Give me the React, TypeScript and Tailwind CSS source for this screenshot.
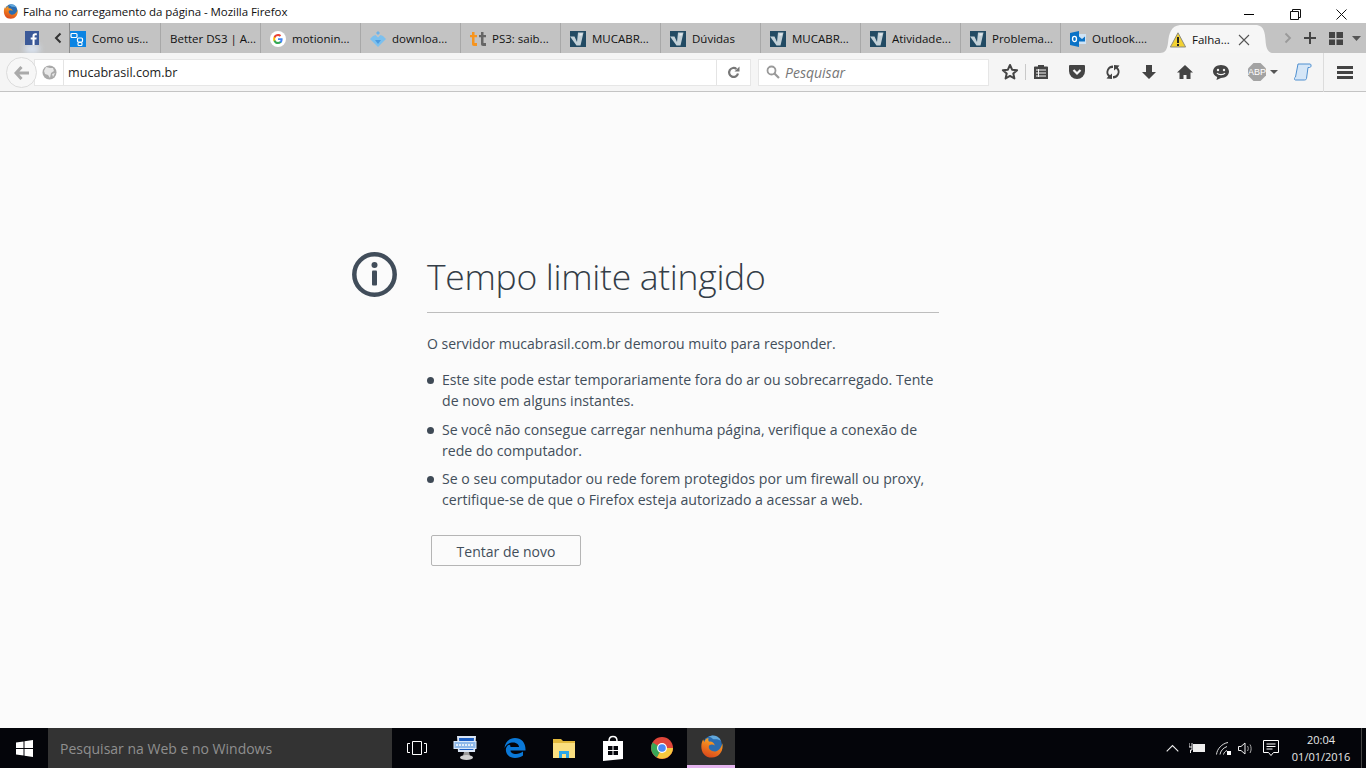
import React from "react";

const MucaIcon = () => (
  <svg width="16" height="16" viewBox="0 0 16 16" className="shrink-0">
    <rect width="16" height="16" fill="#214a63" />
    <path d="M0 5.500h4.500L7 11l1-9.500h5.500L10.500 14.500H6.500z" fill="#c2d0d7" />
    <path d="M9.500 2.500h3l-1 2H9.500z" fill="#e3eaee" />
  </svg>
);

const FbIcon = () => (
  <svg width="14" height="14" viewBox="0 0 14 14">
    <rect width="14" height="14" fill="#3b5998" />
    <path d="M9.600 14V8.600h1.800l.3-2.100H9.600V5.200c0-.6.2-1 1-1h1.200V2.300c-.3 0-.9-.1-1.600-.1-1.600 0-2.700 1-2.700 2.800v1.500H5.700v2.100h1.800V14z" fill="#fff" />
  </svg>
);

const ChainIcon = () => (
  <svg width="16" height="16" viewBox="0 0 16 16" className="shrink-0">
    <rect width="16" height="16" fill="#0b84e3" />
    <rect x="1" y="2.500" width="6" height="4" rx="1" fill="none" stroke="#fff" strokeWidth="1.200" />
    <rect x="7.500" y="7" width="5" height="4" rx="1" fill="none" stroke="#fff" strokeWidth="1.200" />
    <rect x="8" y="11.500" width="4" height="3" rx="1" fill="none" stroke="#fff" strokeWidth="1.100" />
  </svg>
);

const GoogleIcon = () => (
  <svg width="16" height="16" viewBox="0 0 16 16" className="shrink-0">
    <circle cx="8" cy="8" r="8" fill="#fff" />
    <path d="M12.600 8.200c0-.4 0-.7-.1-1H8v1.900h2.600c-.1.6-.5 1.200-1 1.500v1.300h1.600c1-.9 1.400-2.200 1.400-3.700z" fill="#4285f4" />
    <path d="M8 13c1.300 0 2.400-.4 3.200-1.200l-1.600-1.200c-.4.3-1 .5-1.600.5-1.300 0-2.300-.9-2.700-2H3.700v1.300C4.500 12 6.100 13 8 13z" fill="#34a853" />
    <path d="M5.300 9.100c-.2-.7-.2-1.400 0-2.100V5.700H3.700c-.7 1.400-.7 3.200 0 4.600z" fill="#fbbc05" />
    <path d="M8 5c.7 0 1.300.2 1.800.7l1.400-1.400C10.400 3.500 9.300 3 8 3 6.100 3 4.500 4 3.700 5.700L5.300 7c.4-1.100 1.400-2 2.700-2z" fill="#ea4335" />
  </svg>
);

const DownloadFav = () => (
  <svg width="16" height="16" viewBox="0 0 16 16" className="shrink-0">
    <path d="M8 0l2 2-2 2-2-2z" fill="#6db3ea" />
    <path d="M3 5l2.500-1L8 6.500 10.500 4 13 5l3 3-8 8-8-8z" fill="#7cc0ee" />
    <path d="M5 9h6l-3 4z" fill="#4a9adf" />
  </svg>
);

const TtIcon = () => (
  <svg width="16" height="16" viewBox="0 0 16 16" className="shrink-0">
    <path d="M2 1h2.500v3H7v2.300H4.500V12H7v3H4c-1.300 0-2-.8-2-2V6.300H0V4h2z" fill="#f7941d" />
    <path d="M11 1h2.500v3H16v2.300h-2.500V12H16v3h-3c-1.300 0-2-.8-2-2V6.300H9V4h2z" fill="#666" />
  </svg>
);

const OutlookIcon = () => (
  <svg width="16" height="16" viewBox="0 0 16 16" className="shrink-0">
    <rect x="8" y="3" width="8" height="10" fill="#cfe3f5" />
    <path d="M9 5.500l3 2.500 3-2.500v5H9z" fill="#0a72c6" />
    <path d="M0 2l9-2v16l-9-2z" fill="#0a72c6" />
    <ellipse cx="4.500" cy="8" rx="2" ry="2.600" fill="none" stroke="#fff" strokeWidth="1.300" />
  </svg>
);

const Warn = () => (
  <svg width="16" height="16" viewBox="0 0 16 16" className="shrink-0">
    <path d="M8 .8L15.600 15H.4z" fill="#f3d232" stroke="#8b8b80" strokeWidth="1" strokeLinejoin="round" />
    <rect x="7" y="5" width="2" height="6" fill="#222" />
    <rect x="7" y="12" width="2" height="2" fill="#222" />
  </svg>
);

const Firefox = ({ size, id }: { size: number; id: string }) => (
  <svg width={size} height={size} viewBox="0 0 24 24" className="shrink-0">
    <defs>
      <linearGradient id={id} x1="0.700" y1="0" x2="0.300" y2="1">
        <stop offset="0" stopColor="#f6b52e" />
        <stop offset="0.500" stopColor="#ee7a1e" />
        <stop offset="1" stopColor="#d9471c" />
      </linearGradient>
    </defs>
    <circle cx="13" cy="10.500" r="10" fill="#2a6cb0" />
    <path d="M13 .5a10 10 0 0 1 9 5.500c-2-1.500-5-2-8-1.500-1.500-1.500-3-2.500-5-3z" fill="#62a8dc" />
    <path d="M3.500 4.500C-.5 10 .5 23.500 12.500 23.500 20.500 23.500 24.800 16 23.300 8.500 22.300 14 18 18 13.500 17 9.500 16 8 12.500 10 10.500c1.500-1 4-1 5.500.5-.8-3-3.500-4.500-6-4-1-1-1.200-2.500-.5-4-3 .5-4 2.500-4.500 4.500-.3-1-.7-2-1.500-3z" fill={`url(#${id})`} />
  </svg>
);

const Tab = ({ icon, label, sep = true }: { icon?: React.ReactNode; label: string; sep?: boolean }) => (
  <div className={`w-[100px] h-[30px] shrink-0 flex items-center gap-[6px] pl-[9px] pt-[1px] text-[11.500px] text-[#111] whitespace-nowrap ${sep ? "border-r border-[#a8a8a8]" : ""}`}>
    {icon}
    <span>{label}</span>
  </div>
);

const ToolGlyph = ({ children }: { children: React.ReactNode }) => (
  <svg width="18" height="18" viewBox="0 0 18 18" className="shrink-0">{children}</svg>
);

const Bullet = ({ children }: { children: React.ReactNode }) => (
  <li className="flex">
    <span className="w-[15px] shrink-0 pt-[8px]">
      <span className="block w-[7px] h-[7px] rounded-full bg-[#3f4a56]" />
    </span>
    <span>{children}</span>
  </li>
);

export default function App() {
  return (
    <div
      className="w-[1366px] h-[768px] overflow-hidden flex flex-col bg-[#fbfbfb]"
      style={{ fontFamily: '"Open Sans", "Noto Sans", sans-serif' }}
    >
      {/* Title bar */}
      <div className="h-[23px] shrink-0 bg-white flex items-center">
        <div className="ml-[3px]"><Firefox size={15} id="ffa" /></div>
        <span className="ml-[5px] text-[11.500px] text-[#111] tracking-[-0.05px]">Falha no carregamento da página - Mozilla Firefox</span>
        <div className="ml-auto mr-[2px] pt-[5px] flex items-center h-full">
          <div className="w-[46px] flex justify-center"><div className="w-[10px] h-px bg-black" /></div>
          <div className="w-[46px] flex justify-center">
            <svg width="11" height="11" viewBox="0 0 11 11"><path d="M.5 2.500h8v8h-8zM2.500 2.500v-2h8v8h-2" fill="none" stroke="#111" /></svg>
          </div>
          <div className="w-[46px] flex justify-center">
            <svg width="11" height="11" viewBox="0 0 11 11"><path d="M.5.500l10 10M10.500.500l-10 10" stroke="#111" /></svg>
          </div>
        </div>
      </div>

      {/* Tab bar */}
      <div className="h-[30px] shrink-0 bg-[#c3c3c3] flex items-center">
        <div className="w-[46px] h-full relative flex items-center justify-end pr-[7px]">
          <div className="absolute left-[25px] bottom-0 w-[14px] h-[8px] bg-[#dbe6f5] blur-[3px]" />
          <div className="relative"><FbIcon /></div>
        </div>
        <div className="w-[24px] h-full flex items-center pl-[8px] border-r border-[#8d8d8d]">
          <svg width="8" height="12" viewBox="0 0 8 12"><path d="M6.500 1.500L2 6l4.500 4.500" fill="none" stroke="#333" strokeWidth="2" /></svg>
        </div>
        <div className="w-[91px] h-[30px] shrink-0 flex items-center gap-[6px] pt-[1px] text-[11.500px] text-[#111] whitespace-nowrap border-r border-[#a8a8a8]">
          <ChainIcon />
          <span>Como us...</span>
        </div>
        <div className="w-[100px] h-[30px] shrink-0 flex items-center pl-[9px] pt-[1px] text-[11.500px] text-[#111] whitespace-nowrap border-r border-[#a8a8a8]">Better DS3 | A...</div>
        <Tab icon={<GoogleIcon />} label="motionin..." />
        <Tab icon={<DownloadFav />} label="downloa..." />
        <Tab icon={<TtIcon />} label="PS3: saib..." />
        <Tab icon={<MucaIcon />} label="MUCABR..." />
        <Tab icon={<MucaIcon />} label="Dúvidas" />
        <Tab icon={<MucaIcon />} label="MUCABR..." />
        <Tab icon={<MucaIcon />} label="Atividade..." />
        <Tab icon={<MucaIcon />} label="Problema..." />
        <Tab icon={<OutlookIcon />} label="Outlook...." sep={false} />
        <div className="w-[102px] h-[28px] self-end shrink-0 ml-[-1px] relative flex items-center pl-[10px] gap-[6px] pt-[1px] text-[11.500px] text-[#111] whitespace-nowrap">
          <svg width="112" height="28" viewBox="0 0 112 28" className="absolute left-0 top-0">
            <path d="M0 28c5 0 7-3 8-10C9 8 11 1 20 0h77c7 1 8 8 8.500 15 .5 8 2 13 8 13z" fill="#f6f6f6" />
          </svg>
          <div className="relative"><Warn /></div>
          <span className="relative">Falha...</span>
          <svg width="12" height="12" viewBox="0 0 12 12" className="relative ml-[2px]"><path d="M1 1l10 10M11 1L1 11" stroke="#555" strokeWidth="1.100" /></svg>
        </div>
        <div className="flex-1 flex items-center pl-[22px] h-full">
          <svg width="8" height="12" viewBox="0 0 8 12"><path d="M1.500 1.500L6 6l-4.500 4.500" fill="none" stroke="#999" strokeWidth="1.800" /></svg>
          <svg width="12" height="12" viewBox="0 0 12 12" className="ml-[12px]"><path d="M6 0v12M0 6h12" stroke="#444" strokeWidth="2" /></svg>
          <svg width="14" height="13" viewBox="0 0 14 13" className="ml-[13px]"><path d="M0 0h6v6H0zM7.500 0H14v6H7.500zM0 7.500h6V13H0zM7.500 7.500H14V13H7.500z" fill="#444" /></svg>
          <svg width="9" height="5" viewBox="0 0 9 5" className="ml-[9px]"><path d="M0 0h9L4.500 5z" fill="#555" /></svg>
        </div>
      </div>

      {/* Navigation bar */}
      <div className="h-[39px] shrink-0 bg-[#f5f5f5] border-b border-[#c4c4c4] flex items-center relative">
        <div className="absolute left-[6px] top-[4px] w-[31px] h-[31px] rounded-full bg-[#f7f7f7] border border-[#dcdcdc] flex items-center justify-center">
          <svg width="16" height="14" viewBox="0 0 16 14"><path d="M7.500 1L2 7l5.500 6M2.500 7H15" fill="none" stroke="#aaa" strokeWidth="3" /></svg>
        </div>
        <div className="ml-[34px] w-[717px] h-[27px] bg-white border border-[#e6e6e6] flex items-center">
          <div className="w-[28px] flex justify-end pr-[6px] shrink-0">
            <svg width="15" height="15" viewBox="0 0 15 15"><circle cx="7.500" cy="7.500" r="7" fill="#a9a9a9" /><path d="M4 2l4 1 3 0 1 3-3 2-1 5-2-3-3-1-1-3zM10 9l3-1-2 4z" fill="#e8e8e8" /></svg>
          </div>
          <div className="h-full w-px bg-[#e4e4e4] mr-[4px]" />
          <span className="text-[12.600px] text-[#222] pt-[3px]">mucabrasil.com.br</span>
          <div className="ml-auto h-full w-[34px] border-l border-[#e4e4e4] flex items-center justify-center">
            <svg width="13" height="13" viewBox="0 0 13 13"><path d="M11 7.500A4.500 4.500 0 1 1 9.500 3" fill="none" stroke="#777" strokeWidth="2.200" /><path d="M7.500 5.500H12.500V.5z" fill="#777" /></svg>
          </div>
        </div>
        <div className="ml-[7px] w-[231px] h-[27px] bg-white border border-[#e6e6e6] flex items-center pl-[7px] gap-[5px]">
          <svg width="14" height="14" viewBox="0 0 14 14"><circle cx="5.500" cy="5.500" r="4" fill="none" stroke="#999" strokeWidth="1.800" /><path d="M8.500 8.500L13 13" stroke="#999" strokeWidth="2.200" /></svg>
          <span className="text-[14px] italic text-[#777] pt-[1px]">Pesquisar</span>
        </div>
        <div className="flex items-center ml-[12px]">
          <ToolGlyph><path d="M9 2l2.100 4.700 5 .5-3.800 3.300 1.100 5L9 12.900l-4.400 2.600 1.100-5L1.900 7.200l5-.5z" fill="none" stroke="#444" strokeWidth="2" strokeLinejoin="round" /></ToolGlyph>
          <div className="w-px h-[16px] bg-[#c9c9c9] ml-[6px] mr-[6px]" />
          <ToolGlyph>
            <path d="M2 4.500c0-.8.500-1 1-1h3V2h6v1.500h3c.5 0 1 .2 1 1V16H2z" fill="#444" />
            <path d="M4 7h10M4 10h10M4 13h10" stroke="#f5f5f5" /><path d="M6.500 6v8" stroke="#f5f5f5" />
          </ToolGlyph>
          <div className="w-[18px]" />
          <ToolGlyph><path d="M2 2h14a1 1 0 0 1 1 1v5a8 8 0 0 1-16 0V3a1 1 0 0 1 1-1z" fill="#444" /><path d="M5.500 7L9 10.500 12.500 7" fill="none" stroke="#f5f5f5" strokeWidth="2.200" /></ToolGlyph>
          <div className="w-[18px]" />
          <ToolGlyph><path d="M9 2.500a6.500 6.500 0 0 0-4.800 10.900L2.500 15.500 8 16V10.500l-2 1.700A4 4 0 0 1 9 5z" fill="#444" /><path d="M9 15.500a6.500 6.500 0 0 0 4.800-10.900l1.700-2.100L10 2v5.500l2-1.700A4 4 0 0 1 9 13z" fill="#444" /></ToolGlyph>
          <div className="w-[18px]" />
          <ToolGlyph><path d="M6 2h6v7h4l-7 7-7-7h4z" fill="#444" /></ToolGlyph>
          <div className="w-[18px]" />
          <ToolGlyph><path d="M9 2L1 9.500h2.500V16h4v-4h3v4h4V9.500H17z" fill="#444" /></ToolGlyph>
          <div className="w-[18px]" />
          <ToolGlyph><path d="M9 2c4.400 0 8 2.800 8 6.500S13.400 15 9 15l-4.500 2 .7-3C2.700 12.900 1 10.900 1 8.500 1 4.800 4.600 2 9 2z" fill="#444" /><circle cx="6" cy="7" r="1.200" fill="#f5f5f5" /><circle cx="12" cy="7" r="1.200" fill="#f5f5f5" /><path d="M5 10c1.500 2.200 6.500 2.200 8 0" fill="none" stroke="#f5f5f5" strokeWidth="1.300" /></ToolGlyph>
          <div className="w-[18px]" />
          <svg width="30" height="18" viewBox="0 0 30 18" className="shrink-0">
            <path d="M5.500 0h7L18 5.500v7L12.500 18h-7L0 12.500v-7z" fill="#a3a3a3" />
            <text x="9" y="12" fontSize="9" fill="#fff" textAnchor="middle" fontFamily="Liberation Sans">ABP</text>
            <path d="M22 7h8l-4 4z" fill="#555" />
          </svg>
          <div className="w-[16px]" />
          <svg width="18" height="18" viewBox="0 0 18 18" className="shrink-0">
            <path d="M4 1h12c1.500 0 1.500 3.500-.5 3.500H14l-1.500 11c-.2 1-1 1.500-2 1.500H1.500c-1.500 0-1.500-2.500 0-3z" fill="#d5e6f7" stroke="#4e8fd0" strokeWidth="1" />
          </svg>
          <div className="w-px h-[39px] bg-[#dcdcdc] ml-[11px] mr-[13px]" />
          <svg width="16" height="13" viewBox="0 0 16 13" className="shrink-0"><path d="M0 0h16v3H0zM0 5h16v3H0zM0 10h16v3H0z" fill="#444" /></svg>
        </div>
      </div>

      {/* Page */}
      <main className="flex-1 relative min-h-0 pt-[155px] pl-[352px]">
        <div className="flex">
          <svg width="45" height="45" viewBox="0 0 45 45" className="shrink-0 mt-[5px]">
            <circle cx="22.500" cy="22.500" r="20.200" fill="none" stroke="#414d5a" strokeWidth="4.500" />
            <circle cx="22.500" cy="13" r="3" fill="#414d5a" />
            <rect x="20" y="18.500" width="5" height="15" rx="1" fill="#414d5a" />
          </svg>
          <div className="ml-[30px] w-[512px] text-[#424e5a]">
            <h1 className="h-[66px] border-b border-[#bdbdbd] text-[35.500px] leading-[58px] font-light text-[#343d47] tracking-[-0.3px]">Tempo limite atingido</h1>
            <p className="mt-[20px] text-[14.030px] leading-[21px]">O servidor mucabrasil.com.br demorou muito para responder.</p>
            <ul className="mt-[15px] flex flex-col gap-[7.500px] text-[14.140px] leading-[21px]">
              <Bullet>Este site pode estar temporariamente fora do ar ou sobrecarregado. Tente<br />de novo em alguns instantes.</Bullet>
              <Bullet>Se você não consegue carregar nenhuma página, verifique a conexão de<br />rede do computador.</Bullet>
              <Bullet>Se o seu computador ou rede forem protegidos por um firewall ou proxy,<br />certifique-se de que o Firefox esteja autorizado a acessar a web.</Bullet>
            </ul>
            <button className="block mt-[25px] ml-[4px] w-[150px] h-[31px] pt-[1px] bg-[#fbfbfb] border border-[#b5b5b5] rounded-[2px] text-[14px] text-[#424e5a]">Tentar de novo</button>
          </div>
        </div>
      </main>

      {/* Taskbar */}
      <div className="h-[40px] shrink-0 bg-[#04050a] flex items-center text-white">
        <div className="w-[48px] flex justify-center">
          <svg width="17" height="17" viewBox="0 0 17 17"><path d="M0 2.500l7.500-1V8H0zM8.500 1.300L17 0v8H8.500zM0 9h7.500v6.500l-7.500-1zM8.500 9H17v8l-8.500-1.200z" fill="#fff" /></svg>
        </div>
        <div className="w-[344px] h-full bg-[#333333] flex items-center pl-[12px] pt-[1px] text-[14px] text-[#8f8f8f]">Pesquisar na Web e no Windows</div>
        <div className="w-[49px] h-full flex items-center justify-center">
          <svg width="20" height="14" viewBox="0 0 20 14"><path d="M5.500.5h9v13h-9z" fill="none" stroke="#fff" /><path d="M3 2.500H.5v9H3M17 2.500h2.500v9H17" fill="none" stroke="#fff" /></svg>
        </div>
        <div className="w-[50px] h-full flex items-center justify-center">
          <svg width="26" height="26" viewBox="0 0 26 26">
            <path d="M4 1h19l-1 16H5z" fill="#dbe6f5" />
            <path d="M6 3h15l-.7 12H6.500z" fill="#1c5fc4" />
            <rect x="1" y="6.500" width="22" height="7" fill="#8fb9ea" stroke="#dbe9fa" strokeWidth="1" />
            <path d="M3 10h18" stroke="#fff" strokeWidth="1.500" strokeDasharray="2 1" />
            <path d="M11 17h5l1 4h-7z" fill="#9a9a9a" />
            <ellipse cx="13.500" cy="22.500" rx="6.500" ry="2.500" fill="#d0d0d0" />
          </svg>
        </div>
        <div className="w-[48px] h-full flex items-center justify-center">
          <svg width="22" height="22" viewBox="0 0 22 22"><path d="M11 1C5 1 1 5.500 .5 11c2-4 6-5.500 8.500-5.500 4 0 6 2.500 6 4.500H6.500C6.500 6 3 8 2 11.500 1 17 5.500 21 11 21c3.500 0 6-1 8-2.500v-4c-2 1.500-4.500 2.500-7 2.500-3 0-5.500-1.500-5.500-3.500h15C22 6 17.500 1 11 1z" fill="#0a78d7" /></svg>
        </div>
        <div className="w-[50px] h-full flex items-center justify-center">
          <svg width="22" height="20" viewBox="0 0 22 20"><path d="M0 1h8l2 2h12v4H0z" fill="#e2b93c" /><path d="M0 5h22v15H0z" fill="#fadf80" /><path d="M6 20v-7h10v7h-3v-4H9v4z" fill="#2aa6e8" /></svg>
        </div>
        <div className="w-[48px] h-full flex items-center justify-center">
          <svg width="22" height="26" viewBox="0 0 22 26"><path d="M1 6h20v18l-20 2z" fill="#fff" /><path d="M7 6c0-6 8-6 8 0" fill="none" stroke="#fff" strokeWidth="1.500" /><path d="M6 11h4.500v4H6zM11.500 11H16v4h-4.500zM6 16h4.500v4H6zM11.500 16H16v4h-4.500z" fill="#04050a" /></svg>
        </div>
        <div className="w-[50px] h-full flex items-center justify-center">
          <svg width="22" height="22" viewBox="0 0 22 22">
            <circle cx="11" cy="11" r="11" fill="#e0463a" />
            <path d="M11 11L1.500 5.500A11 11 0 0 0 6 20.500z" fill="#3aa757" />
            <path d="M11 11l-5 9.500A11 11 0 0 0 22 11z" fill="#f7c93e" />
            <circle cx="11" cy="11" r="5" fill="#fff" /><circle cx="11" cy="11" r="3.800" fill="#4a8af4" />
          </svg>
        </div>
        <div className="w-[48px] h-full bg-[#323232] flex items-center justify-center border-b-[3px] border-[#e4b4ee]">
          <Firefox size={23} id="ffb" />
        </div>
        <div className="ml-auto flex items-center h-full">
          <svg width="13" height="8" viewBox="0 0 13 8"><path d="M.7 7.300L6.500 1.500l5.800 5.800" fill="none" stroke="#eee" strokeWidth="1.100" /></svg>
          <svg width="16" height="12" viewBox="0 0 16 12" className="ml-[10px]"><path d="M4 2h12v8H4z" fill="#eee" /><path d="M0 1v4M3 1v4M0 5h3v3H1.500v3" fill="none" stroke="#eee" /></svg>
          <svg width="15" height="13" viewBox="0 0 15 13" className="ml-[11px]"><path d="M.5 12.500C1 7 6 1.500 12 .5M4 12.500c.5-3.500 3-6.500 7-8M7.500 12.500c.5-2 1.500-3 3.500-4" fill="none" stroke="#ddd" /><path d="M11 9h4v4h-4z" fill="#fff" /></svg>
          <svg width="16" height="13" viewBox="0 0 16 13" className="ml-[7px]"><path d="M.5 4.500H3L7 1v11L3 8.500H.5z" fill="none" stroke="#eee" /><path d="M9.500 4c1 1.500 1 3.500 0 5M12 2.500c1.500 2.500 1.500 6 0 8.500" fill="none" stroke="#aaa" /></svg>
          <svg width="16" height="17" viewBox="0 0 16 17" className="ml-[9px]"><path d="M.5.500h15v12h-5L8 15.500 5.500 12.500h-5zM3.500 4h9M3.500 6.500h9M3.500 9h6" fill="none" stroke="#fff" /></svg>
          <div className="w-[70px] ml-[7px] text-center text-[11px] leading-[17px] text-[#e8e8e8]">
            <div>20:04</div>
            <div>01/01/2016</div>
          </div>
          <div className="w-[5px] h-full border-l border-[#444] ml-[5px]" />
        </div>
      </div>
    </div>
  );
}
